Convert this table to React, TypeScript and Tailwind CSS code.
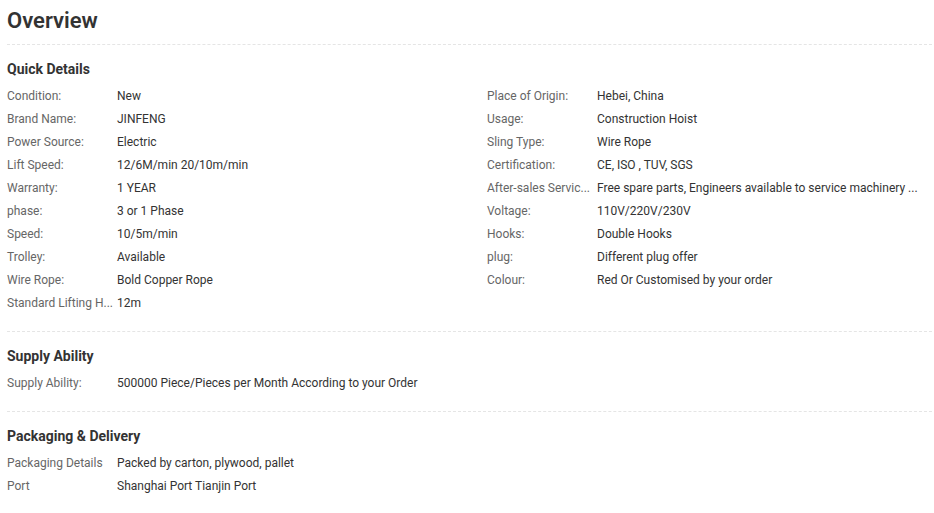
const quick: [string, string][] = [
  ['Condition:', 'New'],
  ['Place of Origin:', 'Hebei, China'],
  ['Brand Name:', 'JINFENG'],
  ['Usage:', 'Construction Hoist'],
  ['Power Source:', 'Electric'],
  ['Sling Type:', 'Wire Rope'],
  ['Lift Speed:', '12/6M/min 20/10m/min'],
  ['Certification:', 'CE, ISO , TUV, SGS'],
  ['Warranty:', '1 YEAR'],
  ['After-sales Servic...', 'Free spare parts, Engineers available to service machinery ...'],
  ['phase:', '3 or 1 Phase'],
  ['Voltage:', '110V/220V/230V'],
  ['Speed:', '10/5m/min'],
  ['Hooks:', 'Double Hooks'],
  ['Trolley:', 'Available'],
  ['plug:', 'Different plug offer'],
  ['Wire Rope:', 'Bold Copper Rope'],
  ['Colour:', 'Red Or Customised by your order'],
  ['Standard Lifting H...', '12m'],
];

function Row({ label, value }: { label: string; value: string }) {
  return (
    <div className="flex h-[23px] items-center text-[12px] min-w-0 whitespace-nowrap">
      <span className="w-[110px] shrink-0 text-[#666]">{label}</span>
      <span className="flex-1 min-w-0 text-[#333]">{value}</span>
    </div>
  );
}

function Section({ title, children }: { title: string; children: React.ReactNode }) {
  return (
    <div className="border-t border-dashed border-[#e5e5e5] pt-[14px] pb-[17px]">
      <h3 className="text-[14px] font-bold text-[#333] leading-[20px] mb-[5px]">{title}</h3>
      {children}
    </div>
  );
}

export default function App() {
  return (
    <div className="w-[934px] h-[513px] bg-white pl-[7px] pr-[2px] overflow-hidden" style={{ fontFamily: 'Roboto, "Liberation Sans", sans-serif' }}>
      <h2 className="text-[22px] font-semibold text-[#333] leading-[28px] pt-[7px] pb-[9px]">Overview</h2>
      <Section title="Quick Details">
        <div className="grid grid-cols-[480px_1fr]">
          {quick.map(([l, v]) => (
            <Row key={l} label={l} value={v} />
          ))}
        </div>
      </Section>
      <Section title="Supply Ability">
        <Row label="Supply Ability:" value="500000 Piece/Pieces per Month According to your Order" />
      </Section>
      <Section title="Packaging & Delivery">
        <Row label="Packaging Details" value="Packed by carton, plywood, pallet" />
        <Row label="Port" value="Shanghai Port Tianjin Port" />
      </Section>
    </div>
  );
}
